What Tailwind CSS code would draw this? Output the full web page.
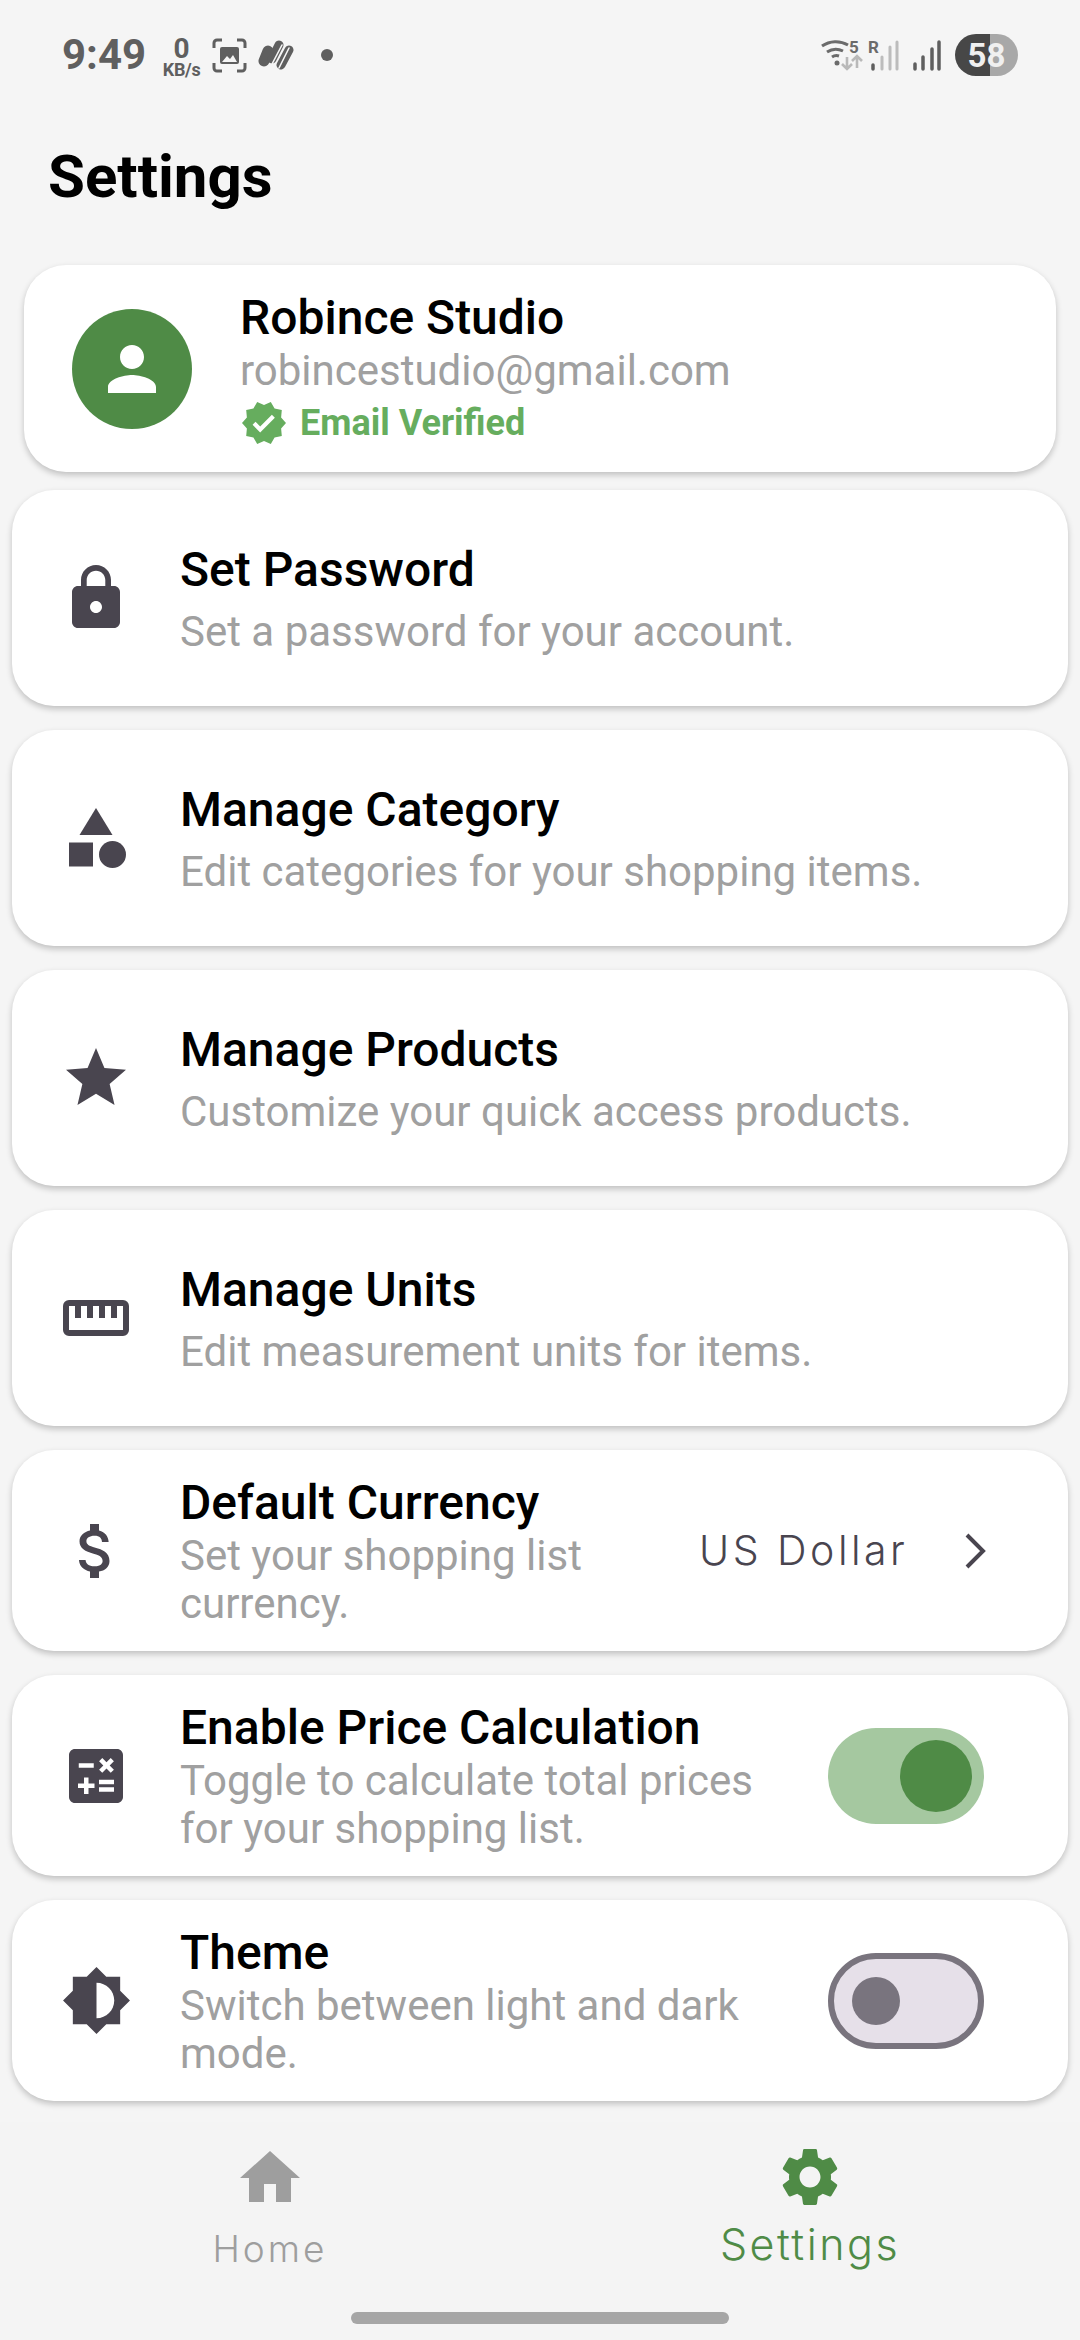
<!DOCTYPE html>
<html lang="en">
<head>
  <meta charset="UTF-8" />
  <meta name="viewport" content="width=device-width, initial-scale=1.0"/>
  <title>Settings</title>
  <script src="https://cdn.jsdelivr.net/npm/@tailwindcss/browser@4"></script>
</head>
<body class="bg-[#f5f5f5] font-['Roboto',sans-serif]">
  <div class="w-[1080px] h-[2340px] overflow-hidden flex flex-col">

    <!-- status bar -->
    <div class="h-[110px] shrink-0 flex items-center pl-[62px] pr-[62px] text-[#5f5f5f]">
      <span class="text-[42px] font-bold leading-none">9:49</span>
      <div class="ml-[16px] w-[39px] mt-[4px] flex flex-col items-center font-bold leading-none">
        <span class="text-[28px] h-[26px] leading-[26px]">0</span>
        <span class="text-[18px] leading-[16px] whitespace-nowrap tracking-[-0.3px]">KB/s</span>
      </div>
      <svg class="ml-[11px]" width="35" height="35" viewBox="0 0 35 35" fill="none">
        <path d="M2 10V5a3 3 0 0 1 3-3h5M25 2h5a3 3 0 0 1 3 3v5M33 25v5a3 3 0 0 1-3 3h-5M10 33H5a3 3 0 0 1-3-3v-5" stroke="#5f5f5f" stroke-width="3"/>
        <rect x="8" y="9" width="19" height="17" rx="2" fill="#5f5f5f"/>
        <path d="M10 24l5-6 3 3 3-4 4 7z" fill="#f5f5f5"/>
      </svg>
      <svg class="ml-[11px]" width="36" height="32" viewBox="0 0 36 32" fill="none" stroke="#5f5f5f" stroke-linecap="round">
        <path d="M10 12L6 22" stroke-width="11"/>
        <path d="M21 6L14 20" stroke-width="9"/>
        <path d="M31 11L23 26" stroke-width="9"/>
        <path d="M13 27L24 6M21 29L31 9" stroke="#f5f5f5" stroke-width="1.6"/>
      </svg>
      <div class="ml-[27px] w-[12px] h-[12px] rounded-full bg-[#5f5f5f]"></div>

      <svg class="ml-auto" width="132" height="40" viewBox="0 0 132 40" fill="none">
        <path d="M2 11a24 24 0 0 1 26-1M7 17a16 16 0 0 1 16-1M12 22a8 8 0 0 1 7-1" stroke="#6b6b6b" stroke-width="3"/>
        <circle cx="17" cy="28" r="2.5" fill="#6b6b6b"/>
        <text x="29" y="18" font-size="17" font-weight="700" fill="#6b6b6b">5</text>
        <path d="M27 22v12M22 29l5 5 5-5" stroke="#b9b9b9" stroke-width="2.6"/>
        <path d="M37 33V21M32 26l5-5 5 5" stroke="#b9b9b9" stroke-width="2.6"/>
        <text x="48" y="18" font-size="17" font-weight="700" fill="#6b6b6b">R</text>
        <path d="M53 30v4" stroke="#5f5f5f" stroke-width="3.5" stroke-linecap="round"/>
        <path d="M62 22v12M70 12v22M77 7v27" stroke="#bcbcbc" stroke-width="3" stroke-linecap="round"/>
        <path d="M95 29v5M103 22v12M112 14v20M119 7v27" stroke="#5f5f5f" stroke-width="3.5" stroke-linecap="round"/>
      </svg>
      <div class="ml-[3px] w-[63px] h-[42px] rounded-full overflow-hidden flex items-center justify-center text-[33px] font-bold bg-[linear-gradient(90deg,#474747_56%,#a8a8a8_56%)] text-[#f0f0f0] leading-none">58</div>
    </div>

    <h1 class="mx-[48px] mt-[28px] h-[78px] text-[60px] leading-[78px] font-bold text-black">Settings</h1>

    <main class="mt-[49px] flex flex-col">
      <!-- profile -->
      <div class="mx-[24px] h-[207px] rounded-[42px] bg-white shadow-[0_3px_6px_rgba(0,0,0,0.22)] flex items-center pl-[48px]">
        <div class="w-[120px] h-[120px] rounded-full bg-[#4f8b46] flex items-center justify-center">
          <svg width="72" height="72" viewBox="0 0 24 24" fill="#fff"><path d="M12 12c2.21 0 4-1.79 4-4s-1.79-4-4-4-4 1.79-4 4 1.79 4 4 4zm0 2c-2.67 0-8 1.34-8 4v2h16v-2c0-2.66-5.33-4-8-4z"/></svg>
        </div>
        <div class="ml-[48px] mt-[2px] flex flex-col">
          <span class="text-[48px] leading-[54px] font-medium text-black">Robince Studio</span>
          <span class="text-[42px] leading-[52px] text-[#a0a0a0]">robincestudio@gmail.com</span>
          <div class="flex items-center h-[52px]">
            <svg width="48" height="48" viewBox="0 0 24 24" fill="#66ad5e"><path d="M23 12l-2.44-2.79.34-3.69-3.61-.82-1.89-3.2L12 2.96 8.6 1.5 6.71 4.69 3.1 5.5l.34 3.7L1 12l2.44 2.79-.34 3.7 3.61.82L8.6 22.5l3.4-1.47 3.4 1.46 1.89-3.19 3.61-.82-.34-3.69L23 12zm-12.91 4.72l-3.8-3.81 1.48-1.48 2.32 2.33 5.85-5.87 1.48 1.48-7.33 7.35z"/></svg>
            <span class="ml-[12px] text-[36px] font-bold text-[#66ad5e]">Email Verified</span>
          </div>
        </div>
      </div>

      <!-- plain rows -->
      <div class="mt-[18px] mx-[12px] flex flex-col gap-[24px]">
        <div class="h-[216px] rounded-[42px] bg-white shadow-[0_3px_6px_rgba(0,0,0,0.22)] flex items-center pl-[51px]">
          <div class="w-[66px] flex justify-center shrink-0">
            <svg class="shrink-0" width="72" height="72" viewBox="0 0 24 24" fill="#49454f"><path d="M18 8h-1V6c0-2.76-2.24-5-5-5S7 3.24 7 6v2H6c-1.1 0-2 .9-2 2v10c0 1.1.9 2 2 2h12c1.1 0 2-.9 2-2V10c0-1.1-.9-2-2-2zm-6 9c-1.1 0-2-.9-2-2s.9-2 2-2 2 .9 2 2-.9 2-2 2zm3.1-9H8.9V6c0-1.71 1.39-3.1 3.1-3.1 1.71 0 3.1 1.39 3.1 3.1v2z"/></svg>
          </div>
          <div class="ml-[51px] mt-[7px] flex flex-col">
            <span class="text-[48px] leading-[60px] font-medium text-black">Set Password</span>
            <span class="text-[42px] leading-[64px] text-[#a0a0a0]">Set a password for your account.</span>
          </div>
        </div>

        <div class="h-[216px] rounded-[42px] bg-white shadow-[0_3px_6px_rgba(0,0,0,0.22)] flex items-center pl-[51px]">
          <div class="w-[66px] flex justify-center shrink-0">
            <svg class="shrink-0" width="72" height="72" viewBox="0 0 24 24" fill="#49454f"><path d="M12 2l-5.5 9h11z"/><circle cx="17.5" cy="17.5" r="4.5"/><path d="M3 13.5h8v8H3z"/></svg>
          </div>
          <div class="ml-[51px] mt-[7px] flex flex-col">
            <span class="text-[48px] leading-[60px] font-medium text-black">Manage Category</span>
            <span class="text-[42px] leading-[64px] text-[#a0a0a0]">Edit categories for your shopping items.</span>
          </div>
        </div>

        <div class="h-[216px] rounded-[42px] bg-white shadow-[0_3px_6px_rgba(0,0,0,0.22)] flex items-center pl-[51px]">
          <div class="w-[66px] flex justify-center shrink-0">
            <svg class="shrink-0" width="72" height="72" viewBox="0 0 24 24" fill="#49454f"><path d="M12 17.27L18.18 21l-1.64-7.03L22 9.24l-7.19-.61L12 2 9.19 8.63 2 9.24l5.46 4.73L5.82 21z"/></svg>
          </div>
          <div class="ml-[51px] mt-[7px] flex flex-col">
            <span class="text-[48px] leading-[60px] font-medium text-black">Manage Products</span>
            <span class="text-[42px] leading-[64px] text-[#a0a0a0]">Customize your quick access products.</span>
          </div>
        </div>

        <div class="h-[216px] rounded-[42px] bg-white shadow-[0_3px_6px_rgba(0,0,0,0.22)] flex items-center pl-[51px]">
          <div class="w-[66px] flex justify-center shrink-0">
            <svg class="shrink-0" width="66" height="36" viewBox="0 0 66 36" fill="#49454f"><path fill-rule="evenodd" d="M6 0h54a6 6 0 0 1 6 6v24a6 6 0 0 1-6 6H6a6 6 0 0 1-6-6V6a6 6 0 0 1 6-6zm6 6v12h6V6h6v12h6V6h6v12h6V6h6v12h6V6h6v24H6V6z"/></svg>
          </div>
          <div class="ml-[51px] mt-[7px] flex flex-col">
            <span class="text-[48px] leading-[60px] font-medium text-black">Manage Units</span>
            <span class="text-[42px] leading-[64px] text-[#a0a0a0]">Edit measurement units for items.</span>
          </div>
        </div>

        <div class="h-[201px] rounded-[42px] bg-white shadow-[0_3px_6px_rgba(0,0,0,0.22)] flex items-center pl-[51px]">
          <div class="w-[66px] flex justify-center shrink-0">
            <svg class="shrink-0" width="72" height="72" viewBox="0 0 24 24" fill="#49454f"><path d="M11.8 10.9c-2.27-.59-3-1.2-3-2.15 0-1.09 1.01-1.85 2.7-1.85 1.78 0 2.44.85 2.5 2.1h2.21c-.07-1.72-1.12-3.3-3.21-3.81V3h-3v2.16c-1.94.42-3.5 1.68-3.5 3.61 0 2.31 1.91 3.46 4.7 4.13 2.5.6 3 1.48 3 2.41 0 .69-.49 1.79-2.7 1.79-2.06 0-2.87-.92-2.98-2.1h-2.2c.12 2.19 1.76 3.42 3.68 3.83V21h3v-2.15c1.95-.37 3.5-1.5 3.5-3.55 0-2.84-2.43-3.81-4.7-4.4z"/></svg>
          </div>
          <div class="ml-[51px] w-[500px] flex flex-col">
            <span class="text-[48px] leading-[59px] font-medium text-black">Default Currency</span>
            <span class="text-[42px] leading-[48px] text-[#a0a0a0]">Set your shopping list currency.</span>
          </div>
          <span class="ml-[19px] font-['Inter',sans-serif] text-[41px] tracking-[3.5px] font-light text-[#49454f] whitespace-nowrap">US Dollar</span>
          <svg class="ml-auto mr-[81px]" width="24" height="38" viewBox="0 0 24 38" fill="none"><path d="M4 3l16 16L4 35" stroke="#49454f" stroke-width="4"/></svg>
        </div>

        <div class="h-[201px] rounded-[42px] bg-white shadow-[0_3px_6px_rgba(0,0,0,0.22)] flex items-center pl-[51px]">
          <div class="w-[66px] flex justify-center shrink-0">
            <svg class="shrink-0" width="72" height="72" viewBox="0 0 24 24" fill="#49454f"><path d="M19 3H5c-1.1 0-2 .9-2 2v14c0 1.1.9 2 2 2h14c1.1 0 2-.9 2-2V5c0-1.1-.9-2-2-2zm-5.97 4.06L14.09 6l1.41 1.41L16.91 6l1.06 1.06-1.41 1.41 1.41 1.41-1.06 1.06-1.41-1.4-1.41 1.41-1.06-1.06 1.41-1.41-1.41-1.42zm-6.78.66h5v1.5h-5v-1.5zM11.5 16h-2v2H8v-2H6v-1.5h2v-2h1.5v2h2V16zm6.5 1.25h-5v-1.5h5v1.5zm0-2.5h-5v-1.5h5v1.5z"/></svg>
          </div>
          <div class="ml-[51px] w-[600px] flex flex-col">
            <span class="text-[48px] leading-[59px] font-medium text-black">Enable Price Calculation</span>
            <span class="text-[42px] leading-[48px] text-[#a0a0a0]">Toggle to calculate total prices for your shopping list.</span>
          </div>
          <div class="ml-auto mr-[84px] w-[156px] h-[96px] rounded-full bg-[#a5c8a0] flex items-center justify-end pr-[12px]">
            <div class="w-[72px] h-[72px] rounded-full bg-[#4f8b46]"></div>
          </div>
        </div>

        <div class="h-[201px] rounded-[42px] bg-white shadow-[0_3px_6px_rgba(0,0,0,0.22)] flex items-center pl-[51px]">
          <div class="w-[66px] flex justify-center shrink-0">
            <svg class="shrink-0" width="71" height="71" viewBox="0 0 24 24" fill="#49454f"><path d="M20 15.31L23.31 12 20 8.69V4h-4.69L12 .69 8.69 4H4v4.69L.69 12 4 15.31V20h4.69L12 23.31 15.31 20H20v-4.69zM12 18V6c3.31 0 6 2.69 6 6s-2.69 6-6 6z"/></svg>
          </div>
          <div class="ml-[51px] w-[600px] flex flex-col">
            <span class="text-[48px] leading-[59px] font-medium text-black">Theme</span>
            <span class="text-[42px] leading-[48px] text-[#a0a0a0]">Switch between light and dark mode.</span>
          </div>
          <div class="ml-auto mr-[84px] w-[156px] h-[96px] rounded-full border-[6px] border-[#79747e] bg-[#e6e0e9] flex items-center pl-[18px]">
            <div class="w-[48px] h-[48px] rounded-full bg-[#79747e]"></div>
          </div>
        </div>
      </div>
    </main>

    <!-- bottom nav -->
    <nav class="mt-[21px] flex-1 bg-[#f4f4f4] relative grid grid-cols-2">
      <div class="flex flex-col items-center pt-[20px]">
        <svg width="72" height="72" viewBox="0 0 24 24" fill="#9e9e9e"><path d="M10 20v-6h4v6h5v-8h3L12 3 2 12h3v8z"/></svg>
        <span class="mt-[7px] font-['Inter',sans-serif] text-[37px] tracking-[3px] font-light text-[#9e9e9e]">Home</span>
      </div>
      <div class="flex flex-col items-center pt-[20px]">
        <svg width="70" height="70" viewBox="0 0 24 24" fill="#4f8b46"><path d="M19.14 12.94c.04-.3.06-.61.06-.94 0-.32-.02-.64-.07-.94l2.03-1.58c.18-.14.23-.41.12-.61l-1.92-3.32c-.12-.22-.37-.29-.59-.22l-2.39.96c-.5-.38-1.03-.7-1.62-.94l-.36-2.54c-.04-.24-.24-.41-.48-.41h-3.84c-.24 0-.43.17-.47.41l-.36 2.54c-.59.24-1.13.57-1.62.94l-2.39-.96c-.22-.08-.47 0-.59.22L2.74 8.87c-.12.21-.08.47.12.61l2.03 1.58c-.05.3-.09.63-.09.94s.02.64.07.94l-2.03 1.58c-.18.14-.23.41-.12.61l1.92 3.32c.12.22.37.29.59.22l2.39-.96c.5.38 1.03.7 1.62.94l.36 2.54c.05.24.24.41.48.41h3.84c.24 0 .44-.17.47-.41l.36-2.54c.59-.24 1.13-.56 1.62-.94l2.39.96c.22.08.47 0 .59-.22l1.92-3.32c.12-.22.07-.47-.12-.61l-2.01-1.58zM12 15.6c-1.98 0-3.6-1.62-3.6-3.6s1.62-3.6 3.6-3.6 3.6 1.62 3.6 3.6-1.62 3.6-3.6 3.6z"/></svg>
        <span class="mt-[0px] font-['Inter',sans-serif] text-[43px] tracking-[2.5px] font-light text-[#4f8b46]">Settings</span>
      </div>
      <div class="absolute left-[351px] bottom-[16px] w-[378px] h-[12px] rounded-full bg-[#a6a6a6]"></div>
    </nav>
  </div>
</body>
</html>
